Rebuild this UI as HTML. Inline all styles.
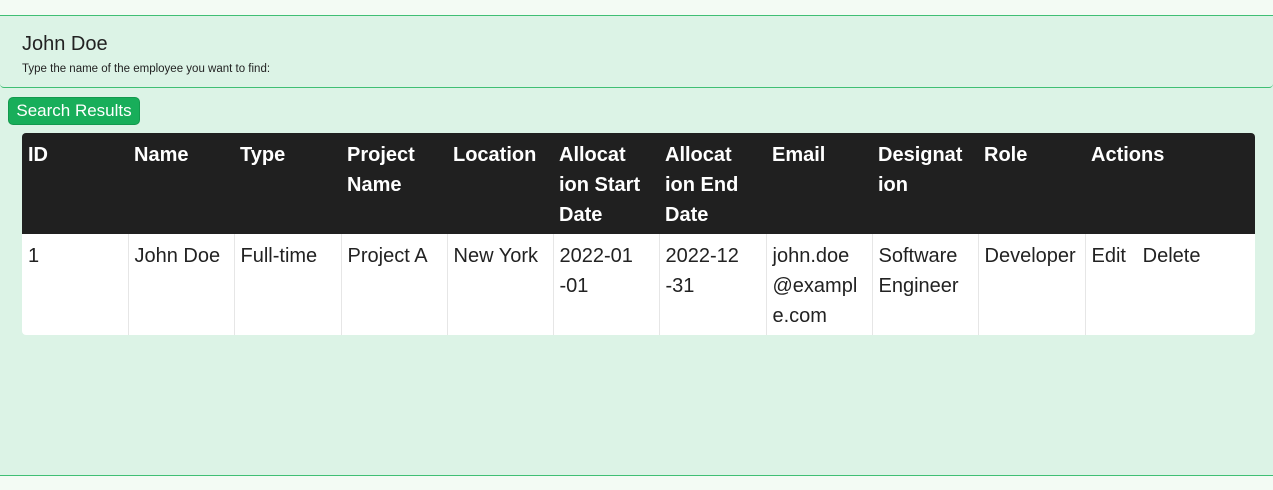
<!DOCTYPE html>
<html><head><style>
body{margin:0;background:#f3fbf4;font-family:"Liberation Sans",sans-serif;width:1273px;height:490px;overflow:hidden;position:relative}
.panel{position:absolute;left:0;top:15px;width:1273px;height:459px;background:#dcf3e6;border-top:1px solid #3fbf74;border-bottom:1px solid #3fbf74}
.hdr{position:absolute;left:0;top:0;width:1273px;height:71px;border-bottom:1px solid #3fbf74;border-radius:0 0 4px 4px}
.hdr h1{position:absolute;left:22px;top:17px;margin:0;font-weight:normal;font-size:20px;color:#222}
.hdr p{position:absolute;left:22px;top:47px;margin:0;font-size:11.5px;color:#222}
.btn{position:absolute;left:8px;top:81px;width:130px;height:26px;background:#18ae5a;border:1px solid #13994e;border-radius:5px;color:#fff;font-size:17px;line-height:26px;text-align:center}
table{position:absolute;left:22px;top:117px;border-collapse:collapse;table-layout:fixed;width:1233px;border-radius:4px;overflow:hidden}
th,td{vertical-align:top;text-align:left;padding:0 6px;font-size:20px;line-height:30px;white-space:nowrap;overflow:hidden}
th{background:#202020;color:#fff;font-weight:bold;height:101px;padding-top:7px;box-sizing:border-box}
td{background:#fff;color:#222;height:101px;border-left:1px solid #e6e6e6;padding-top:7px;box-sizing:border-box}
td:first-child{border-left:none}
</style></head><body>
<div class="panel">
<div class="hdr"><h1>John Doe</h1><p>Type the name of the employee you want to find:</p></div>
<div class="btn">Search Results</div>
<table>
<colgroup><col style="width:106px"><col style="width:106px"><col style="width:107px"><col style="width:106px"><col style="width:106px"><col style="width:106px"><col style="width:107px"><col style="width:106px"><col style="width:106px"><col style="width:107px"><col></colgroup>
<tr><th>ID</th><th>Name</th><th>Type</th><th>Project<br>Name</th><th>Location</th><th>Allocat<br>ion Start<br>Date</th><th>Allocat<br>ion End<br>Date</th><th>Email</th><th>Designat<br>ion</th><th>Role</th><th>Actions</th></tr>
<tr><td>1</td><td>John Doe</td><td>Full-time</td><td>Project A</td><td>New York</td><td>2022-01<br>-01</td><td>2022-12<br>-31</td><td>john.doe<br>@exampl<br>e.com</td><td>Software<br>Engineer</td><td>Developer</td><td>Edit&nbsp;&nbsp; Delete</td></tr>
</table>
</div>
</body></html>
